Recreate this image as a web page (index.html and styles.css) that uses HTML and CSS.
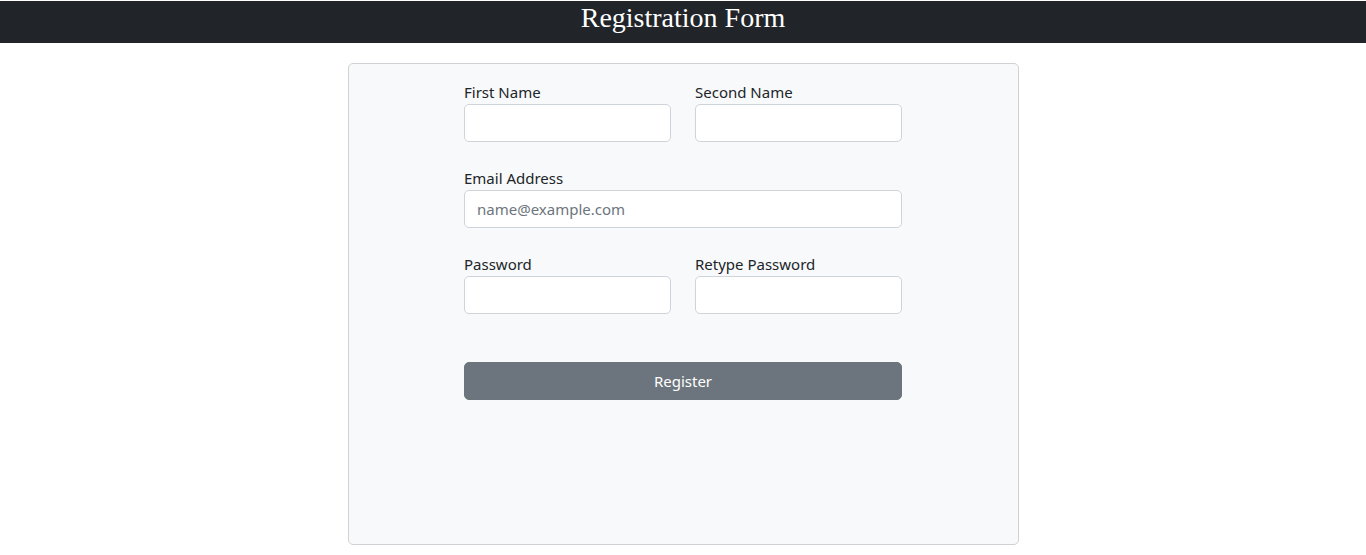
FILE: index.html
```html
<!DOCTYPE html>
<html>
<head>
<meta charset="utf-8">
<link rel="stylesheet" href="styles.css">
<title>Registration Form</title>
</head>
<body>
<header class="topbar"><h1 class="title">Registration Form</h1></header>
<main class="card">
  <form class="form">
    <div class="row">
      <div class="field"><label class="label">First Name</label><input class="input" type="text"></div>
      <div class="field"><label class="label">Second Name</label><input class="input" type="text"></div>
    </div>
    <div class="row">
      <div class="field"><label class="label">Email Address</label><input class="input" type="email" placeholder="name@example.com"></div>
    </div>
    <div class="row">
      <div class="field"><label class="label">Password</label><input class="input" type="password"></div>
      <div class="field"><label class="label">Retype Password</label><input class="input" type="password"></div>
    </div>
    <button class="btn" type="button">Register</button>
  </form>
</main>
</body>
</html>
```
FILE: styles.css
```css
* { box-sizing: border-box; }
html, body { margin: 0; padding: 0; background: #fff; }
body { font-family: "Noto Sans", "Open Sans", sans-serif; color: #212529; padding-top: 1px; background: #fff; }
.topbar { background: #212529; height: 42px; display: flex; justify-content: center; align-items: flex-start; padding-top: 3px; }
.title { margin: 0; font-family: "Liberation Serif", serif; font-weight: normal; font-size: 28px; color: #fff; line-height: 28px; }
.card { width: 671px; height: 482px; margin: 20px auto 0; background: #f8f9fa; border: 1px solid #cfd1d4; border-radius: 5px; padding-top: 16px; }
.form { width: 438px; margin: 0 auto; display: flex; flex-direction: column; gap: 24px; }
.row { display: flex; gap: 24px; }
.field { flex: 1 1 0; min-width: 0; display: flex; flex-direction: column; }
.label { font-size: 15px; line-height: 24px; height: 24px; }
.input { width: 100%; min-width: 0; height: 38px; border: 1px solid #ced4da; border-radius: 5px; background: #fff; padding: 6px 12px; font-family: inherit; font-size: 15px; color: #212529; }
.input::placeholder { color: #6c757d; }
.btn { margin-top: 24px; height: 38px; border: 1px solid #6c757d; border-radius: 5px; background: #6c757d; color: #fff; font-family: inherit; font-size: 15px; }
```
